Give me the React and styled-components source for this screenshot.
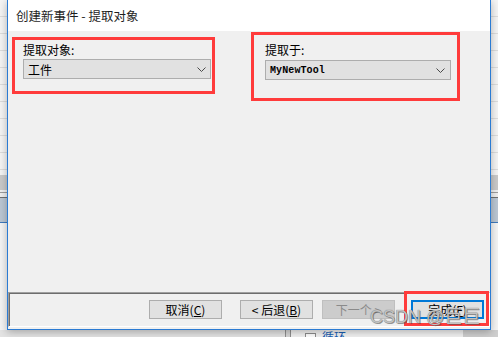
import React from 'react';
import styled, { createGlobalStyle } from 'styled-components';

const GlobalStyle = createGlobalStyle`
  html, body {
    margin: 0;
    padding: 0;
    background: #e4e4e4;
    overflow: hidden;
  }
  body {
    font-family: "Noto Sans CJK SC", "Liberation Sans", sans-serif;
  }
`;

const Desktop = styled.div`
  position: relative;
  width: 498px;
  height: 337px;
  display: grid;
  grid-template-columns: 7px 484px 7px;
  grid-template-rows: 330px 7px;
  overflow: hidden;
`;

// background app peeking out at the sides of the dialog
const SideStrip = styled.div`
  background:
    linear-gradient(
      to bottom,
      transparent 0 175px,
      #c9c9c9 175px 190px,
      #f0f0f0 190px 192px,
      #9c9c9c 192px 193px,
      #eeeeee 193px 197px,
      #6f6f6f 197px 198px,
      #bac6d3 198px 222px,
      #3f79bb 222px 223px,
      transparent 223px
    ),
    repeating-linear-gradient(to bottom, transparent 0 16px, #dcdcdc 16px 17px) top / 100% 175px no-repeat,
    #f4f4f4;
`;

const BottomStrip = styled.div`
  grid-column: 1 / 4;
  display: flex;
  background: #e2e2e2;
  overflow: hidden;
`;

const StripPart = styled.div`
  flex: ${p => (p.$grow ? 1 : 'none')};
  width: ${p => p.$width}px;
  background: ${p => p.$bg};
  display: flex;
  align-items: flex-start;
  gap: 6px;
  padding-left: ${p => p.$pad || 0}px;
`;

const MiniCheck = styled.span`
  width: 9px;
  height: 9px;
  margin-top: 3px;
  border: 1px solid #8e8e8e;
  background: #fff;
`;

const MiniLabel = styled.span`
  font-size: 12px;
  line-height: 12px;
  margin-top: 1px;
  color: #1a5fb4;
`;

const Window = styled.div`
  z-index: 1;
  box-sizing: border-box;
  display: flex;
  flex-direction: column;
  border: 1px solid #2b7bd3;
  border-top: none;
  background: #f0f0f0;
  box-shadow: 0 2px 8px rgba(0, 0, 0, 0.28);
`;

const TitleBar = styled.div`
  height: 31px;
  flex: none;
  display: flex;
  align-items: center;
  padding-left: 8px;
  background: #fff;
  color: #1e1e1e;
  font-size: 12.5px;
`;

const Body = styled.div`
  flex: 1;
  display: flex;
  align-items: flex-start;
  gap: 36px;
  padding: 1px 0 0 4px;
`;

const FieldGroup = styled.div`
  box-sizing: border-box;
  width: ${p => p.$width}px;
  height: ${p => p.$height}px;
  margin-top: ${p => p.$offset || 0}px;
  padding: ${p => p.$padTop}px 0 0 ${p => p.$padLeft}px;
  border: 3px solid #ff3b3b;
  display: flex;
  flex-direction: column;
  gap: ${p => p.$gap}px;
`;

const Label = styled.div`
  font-size: 12px;
  line-height: 14px;
  color: #000;
`;

const Select = styled.div`
  box-sizing: border-box;
  width: ${p => p.$width}px;
  height: 20px;
  display: flex;
  align-items: center;
  justify-content: space-between;
  padding: 0 ${p => p.$padRight}px 0 4px;
  background: #e1e1e1;
  border: 1px solid #adadad;
  color: #000;
  font-size: 12px;
`;

const MonoValue = styled.span`
  font-family: "Liberation Mono", "DejaVu Sans Mono", monospace;
  font-size: 10px;
  font-weight: bold;
  letter-spacing: 0.1px;
`;

const Footer = styled.div`
  box-sizing: border-box;
  height: 35px;
  flex: none;
  margin-bottom: 2px;
  display: flex;
  align-items: flex-start;
  padding: 7px 0 0 140px;
  border-top: 1px solid #a0a0a0;
  border-left: 1px solid #a0a0a0;
  border-right: 1px solid #fff;
  border-bottom: 1px solid #fff;
  box-shadow: inset 1px 1px 0 #6d6d6d;
`;

const Button = styled.div`
  box-sizing: border-box;
  width: 73px;
  height: 19px;
  margin-left: ${p => p.$gap || 0}px;
  display: flex;
  align-items: center;
  justify-content: center;
  font-size: 12px;
  color: ${p => (p.$disabled ? '#8a8a8a' : '#000')};
  background: ${p => (p.$disabled ? '#cccccc' : '#e1e1e1')};
  border: ${p => (p.$default ? '2px solid #0078d7' : `1px solid ${p.$disabled ? '#bfbfbf' : '#adadad'}`)};
`;

const Key = styled.span`
  text-decoration: underline;
`;

const Highlight = styled.div`
  margin: -9px 0 0 ${p => p.$gap}px;
  padding: 6px 2px 4px 4px;
  border: 3px solid #ff3b3b;
`;

const Watermark = styled.div`
  position: absolute;
  left: 370px;
  top: 308px;
  z-index: 5;
  font-family: "Liberation Sans", "Noto Sans CJK SC", sans-serif;
  font-size: 18px;
  line-height: 18px;
  color: rgba(205, 205, 205, 0.92);
  text-shadow: 0 0 1px #555, 1px 1px 0 rgba(80, 80, 80, 0.55);
  white-space: nowrap;
`;

const Chevron = () => (
  <svg width="9" height="5" viewBox="0 0 9 5">
    <polyline points="0.5,0.5 4.5,4.5 8.5,0.5" fill="none" stroke="#4a4a4a" strokeWidth="1" />
  </svg>
);

export default function App() {
  return (
    <>
      <GlobalStyle />
      <Desktop>
        <SideStrip />
        <Window>
          <TitleBar>创建新事件 - 提取对象</TitleBar>
          <Body>
            <FieldGroup $width={203} $height={57} $offset={5} $padTop={3} $padLeft={8} $gap={2}>
              <Label>提取对象:</Label>
              <Select $width={188} $padRight={4}>
                <span>工件</span>
                <Chevron />
              </Select>
            </FieldGroup>
            <FieldGroup $width={209} $height={69} $padTop={8} $padLeft={11} $gap={3}>
              <Label>提取于:</Label>
              <Select $width={186} $padRight={5}>
                <MonoValue>MyNewTool</MonoValue>
                <Chevron />
              </Select>
            </FieldGroup>
          </Body>
          <Footer>
            <Button>取消(<Key>C</Key>)</Button>
            <Button $gap={18}>&lt; 后退(<Key>B</Key>)</Button>
            <Button $gap={9} $disabled>下一个 &gt;</Button>
            <Highlight $gap={9}>
              <Button $default>完成(<Key>F</Key>)</Button>
            </Highlight>
          </Footer>
        </Window>
        <SideStrip />
        <BottomStrip>
          <StripPart $width={285} $bg="#e3e3e3" />
          <StripPart $width={1} $bg="#8f8f8f" />
          <StripPart $width={4} $bg="#d6d6d6" />
          <StripPart $width={1} $bg="#8f8f8f" />
          <StripPart $grow $bg="#f2f2f2" $pad={14}>
            <MiniCheck />
            <MiniLabel>循环</MiniLabel>
          </StripPart>
          <StripPart $width={35} $bg="#cfcfcf" />
        </BottomStrip>
        <Watermark>CSDN @巨巨</Watermark>
      </Desktop>
    </>
  );
}
